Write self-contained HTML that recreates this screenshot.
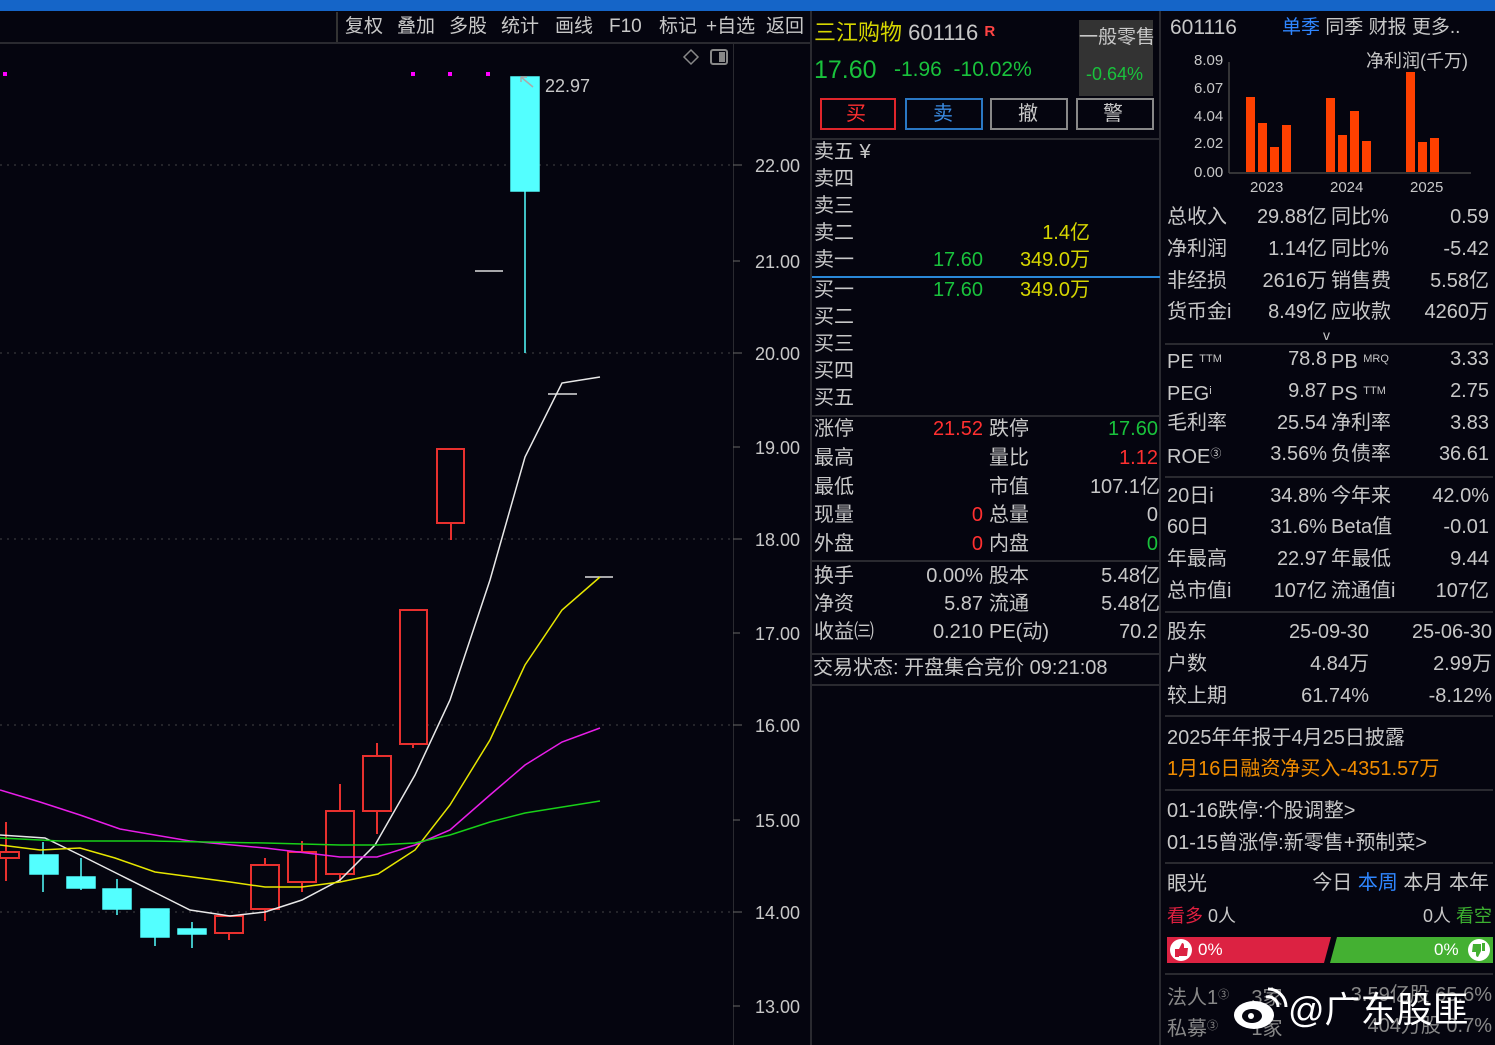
<!DOCTYPE html>
<html><head><meta charset="utf-8"><style>
*{margin:0;padding:0;box-sizing:border-box}
body{width:1495px;height:1045px;background:#05050f;overflow:hidden;position:relative;font-family:"Liberation Sans","Noto Sans CJK SC",sans-serif;color:#c8c8c8;font-size:20px}
.t{position:absolute;line-height:24px;white-space:nowrap}
.r{text-align:right}
.hl{position:absolute;height:2px;background:#2a2a30}
.g{color:#19c23c}.rd{color:#ff3030}.y{color:#d6d600}.b{color:#2f86ff}
sup{font-size:11px;vertical-align:6px}
</style></head><body>
<div style="position:absolute;left:0;top:0;width:1495px;height:11px;background:#1565c8"></div>
<!-- toolbar -->
<div style="position:absolute;left:0;top:42px;width:810px;height:2px;background:#2a2a30"></div>
<div style="position:absolute;left:336px;top:12px;width:2px;height:30px;background:#333"></div>
<div class="t" style="top:15px;left:345px;font-size:19px;word-spacing:0">复权</div>
<div class="t" style="top:15px;left:397px;font-size:19px">叠加</div>
<div class="t" style="top:15px;left:449px;font-size:19px">多股</div>
<div class="t" style="top:15px;left:501px;font-size:19px">统计</div>
<div class="t" style="top:15px;left:555px;font-size:19px">画线</div>
<div class="t" style="top:15px;left:609px;font-size:19px">F10</div>
<div class="t" style="top:15px;left:659px;font-size:19px">标记</div>
<div class="t" style="top:15px;left:706px;font-size:19px">+自选</div>
<div class="t" style="top:15px;left:766px;font-size:19px">返回</div>
<div style="position:absolute;left:733px;top:44px;width:1px;height:1001px;background:#2a2a30"></div>
<div style="position:absolute;left:810px;top:11px;width:2px;height:1034px;background:#2a2a30"></div>
<div style="position:absolute;left:1159px;top:11px;width:2px;height:1034px;background:#2a2a30"></div>
<svg style="position:absolute;left:0;top:0" width="810" height="1045">
<g stroke="#444" stroke-dasharray="2,5" stroke-width="1">
<line x1="0" y1="165" x2="733" y2="165"/><line x1="0" y1="353" x2="733" y2="353"/><line x1="0" y1="539" x2="733" y2="539"/><line x1="0" y1="725" x2="733" y2="725"/><line x1="0" y1="912" x2="733" y2="912"/>
</g>
<g stroke="#666" stroke-width="1"><line x1="733" y1="165" x2="742" y2="165"/><line x1="733" y1="261" x2="740" y2="261"/><line x1="733" y1="353" x2="742" y2="353"/><line x1="733" y1="447" x2="740" y2="447"/><line x1="733" y1="539" x2="742" y2="539"/><line x1="733" y1="633" x2="740" y2="633"/><line x1="733" y1="725" x2="742" y2="725"/><line x1="733" y1="820" x2="740" y2="820"/><line x1="733" y1="912" x2="742" y2="912"/><line x1="733" y1="1006" x2="740" y2="1006"/></g>
<path d="M691 50 L698 57 L691 64 L684 57Z" fill="none" stroke="#888" stroke-width="1.5"/>
<rect x="711" y="50" width="16" height="14" rx="2" fill="none" stroke="#888" stroke-width="2"/><rect x="719" y="52" width="6" height="10" fill="#888"/>
<g fill="#f0f"><rect x="3" y="72" width="4" height="4"/><rect x="411" y="72" width="4" height="4"/><rect x="448" y="72" width="4" height="4"/><rect x="486" y="72" width="4" height="4"/></g>
<!-- cyan candles -->
<g stroke="#53ffff" fill="#53ffff" stroke-width="1.5">
<line x1="43" y1="842" x2="43" y2="892"/><rect x="30" y="855" width="28" height="19"/>
<line x1="81" y1="858" x2="81" y2="890"/><rect x="67" y="877" width="28" height="11"/>
<line x1="117" y1="879" x2="117" y2="915"/><rect x="103" y="889" width="28" height="20"/>
<line x1="155" y1="909" x2="155" y2="946"/><rect x="141" y="909" width="28" height="28"/>
<line x1="192" y1="922" x2="192" y2="948"/><rect x="178" y="929" width="28" height="5"/>
<line x1="525" y1="77" x2="525" y2="353"/><rect x="511" y="77" width="28" height="114"/>
</g>
<!-- red candles -->
<g stroke="#e8302e" fill="#05050f" stroke-width="2">
<line x1="6" y1="822" x2="6" y2="881"/><rect x="0" y="852" width="19" height="6"/>
<line x1="229" y1="933" x2="229" y2="940"/><rect x="215" y="916" width="28" height="17"/>
<line x1="265" y1="858" x2="265" y2="921"/><rect x="251" y="865" width="28" height="44"/>
<line x1="302" y1="841" x2="302" y2="892"/><rect x="288" y="852" width="28" height="30"/>
<line x1="340" y1="784" x2="340" y2="881"/><rect x="326" y="811" width="28" height="63"/>
<line x1="377" y1="743" x2="377" y2="834"/><rect x="363" y="756" width="28" height="55"/>
<line x1="413" y1="744" x2="413" y2="748"/><rect x="400" y="610" width="27" height="134"/>
<line x1="451" y1="523" x2="451" y2="540"/><rect x="437" y="449" width="27" height="74"/>
</g>
<g stroke="#ddd" stroke-width="1.5"><line x1="475" y1="271" x2="503" y2="271"/><line x1="548" y1="394" x2="577" y2="394"/></g>
<line x1="585" y1="577" x2="613" y2="577" stroke="#ddd" stroke-width="1.5"/>
<g fill="none" stroke-width="1.5">
<polyline stroke="#e8e8e8" points="0,835 45,838 80,855 120,875 160,895 190,910 230,916 265,912 302,900 340,880 375,845 415,775 450,700 490,580 525,457 562,383 600,377"/>
<polyline stroke="#e6e600" points="0,845 40,850 80,848 115,858 155,872 230,882 265,887 302,887 340,882 378,874 415,850 450,805 490,740 525,665 562,610 600,577"/>
<polyline stroke="#e81ee8" points="0,790 40,802 80,815 120,829 190,841 265,848 340,857 377,857 415,845 450,830 490,795 525,765 562,742 600,728"/>
<polyline stroke="#18d018" points="0,838 60,841 150,841 265,843 340,845 377,845 415,843 450,835 490,822 525,813 600,801"/>
</g>
<path d="M521 77 L533 87 M521 77 L527 77 M521 77 L521 82" stroke="#aaa" stroke-width="1.5" fill="none"/>
</svg>
<div class="t" style="top:74px;left:545px;font-size:18px">22.97</div>
<div class="t" style="top:154px;left:755px;font-size:18px">22.00</div>
<div class="t" style="top:250px;left:755px;font-size:18px">21.00</div>
<div class="t" style="top:342px;left:755px;font-size:18px">20.00</div>
<div class="t" style="top:436px;left:755px;font-size:18px">19.00</div>
<div class="t" style="top:528px;left:755px;font-size:18px">18.00</div>
<div class="t" style="top:622px;left:755px;font-size:18px">17.00</div>
<div class="t" style="top:714px;left:755px;font-size:18px">16.00</div>
<div class="t" style="top:809px;left:755px;font-size:18px">15.00</div>
<div class="t" style="top:901px;left:755px;font-size:18px">14.00</div>
<div class="t" style="top:995px;left:755px;font-size:18px">13.00</div>

<!-- quote column -->
<div class="t" style="top:20px;left:814px;font-size:22px"><span class="y">三江购物</span> 601116 <span style="color:#ff4444;font-size:15px;font-weight:bold;vertical-align:4px">R</span></div>
<div style="position:absolute;left:1079px;top:20px;width:74px;height:76px;background:#333"></div>
<div class="t" style="top:26px;left:1079px;font-size:19px">一般零售</div>
<div class="t g" style="top:62px;left:1086px;font-size:18px">-0.64%</div>
<div class="t g" style="top:57px;left:814px;font-size:25px;line-height:26px">17.60</div>
<div class="t g" style="top:58px;left:894px;font-size:21px">-1.96&nbsp;&nbsp;-10.02%</div>
<div style="position:absolute;left:820px;top:98px;width:76px;height:32px;border:2px solid #e0252b"></div>
<div class="t rd" style="top:102px;left:846px">买</div>
<div style="position:absolute;left:905px;top:98px;width:78px;height:32px;border:2px solid #2a78c4"></div>
<div class="t b" style="top:102px;left:933px;color:#3a8ae0">卖</div>
<div style="position:absolute;left:990px;top:98px;width:78px;height:32px;border:2px solid #888"></div>
<div class="t" style="top:102px;left:1018px">撤</div>
<div style="position:absolute;left:1076px;top:98px;width:78px;height:32px;border:2px solid #888"></div>
<div class="t" style="top:102px;left:1103px">警</div>
<div class="hl" style="left:812px;top:138px;width:347px"></div>
<div class="t" style="top:140px;left:814px">卖五 ¥</div>
<div class="t" style="top:167px;left:814px">卖四</div>
<div class="t" style="top:194px;left:814px">卖三</div>
<div class="t" style="top:221px;left:814px">卖二</div>
<div class="t" style="top:248px;left:814px">卖一</div>
<div class="t y" style="top:221px;right:405px">1.4亿</div>
<div class="t g" style="top:248px;right:512px">17.60</div>
<div class="t y" style="top:248px;right:405px">349.0万</div>
<div style="position:absolute;left:812px;top:276px;width:348px;height:1.5px;background:#2a88d8"></div>
<div class="t" style="top:278px;left:814px">买一</div>
<div class="t g" style="top:278px;right:512px">17.60</div>
<div class="t y" style="top:278px;right:405px">349.0万</div>
<div class="t" style="top:305px;left:814px">买二</div>
<div class="t" style="top:332px;left:814px">买三</div>
<div class="t" style="top:359px;left:814px">买四</div>
<div class="t" style="top:386px;left:814px">买五</div>
<div class="hl" style="left:812px;top:415px;width:347px"></div>
<div class="t" style="top:417px;left:814px">涨停</div><div class="t rd" style="top:417px;right:512px">21.52</div><div class="t" style="top:417px;left:989px">跌停</div><div class="t g" style="top:417px;right:337px">17.60</div>
<div class="t" style="top:446px;left:814px">最高</div><div class="t" style="top:446px;left:989px">量比</div><div class="t rd" style="top:446px;right:337px">1.12</div>
<div class="t" style="top:475px;left:814px">最低</div><div class="t" style="top:475px;left:989px">市值</div><div class="t" style="top:475px;right:335px">107.1亿</div>
<div class="t" style="top:503px;left:814px">现量</div><div class="t rd" style="top:503px;right:512px">0</div><div class="t" style="top:503px;left:989px">总量</div><div class="t" style="top:503px;right:337px">0</div>
<div class="t" style="top:532px;left:814px">外盘</div><div class="t rd" style="top:532px;right:512px">0</div><div class="t" style="top:532px;left:989px">内盘</div><div class="t g" style="top:532px;right:337px">0</div>
<div class="hl" style="left:812px;top:560px;width:347px"></div>
<div class="t" style="top:564px;left:814px">换手</div><div class="t" style="top:564px;right:512px">0.00%</div><div class="t" style="top:564px;left:989px">股本</div><div class="t" style="top:564px;right:335px">5.48亿</div>
<div class="t" style="top:592px;left:814px">净资</div><div class="t" style="top:592px;right:512px">5.87</div><div class="t" style="top:592px;left:989px">流通</div><div class="t" style="top:592px;right:335px">5.48亿</div>
<div class="t" style="top:620px;left:814px">收益㈢</div><div class="t" style="top:620px;right:512px">0.210</div><div class="t" style="top:620px;left:989px">PE(动)</div><div class="t" style="top:620px;right:337px">70.2</div>
<div class="hl" style="left:812px;top:653px;width:347px"></div>
<div class="t" style="top:656px;left:813px">交易状态: 开盘集合竞价 09:21:08</div>
<div class="hl" style="left:812px;top:684px;width:347px"></div>

<!-- F10 column -->
<div class="t" style="top:16px;left:1170px;font-size:21px">601116</div>
<div class="t" style="top:16px;left:1282px;font-size:19px"><span class="b">单季</span> 同季 财报 更多..</div>
<svg style="position:absolute;left:1161px;top:44px" width="334" height="160">
<line x1="68" y1="18" x2="68" y2="129" stroke="#444" stroke-width="1.5"/>
<line x1="68" y1="129" x2="310" y2="129" stroke="#444" stroke-width="1.5"/>
<g fill="#ff4000">
<rect x="85" y="53" width="9" height="75"/><rect x="97" y="79" width="9" height="49"/><rect x="109" y="103" width="9" height="25"/><rect x="121" y="81" width="9" height="47"/>
<rect x="165" y="54" width="9" height="74"/><rect x="177" y="91" width="9" height="37"/><rect x="189" y="67" width="9" height="61"/><rect x="201" y="97" width="9" height="31"/>
<rect x="245" y="28" width="9" height="100"/><rect x="257" y="98" width="9" height="30"/><rect x="269" y="94" width="9" height="34"/>
</g></svg>
<div class="t" style="top:49px;left:1194px;font-size:15px">8.09</div>
<div class="t" style="top:77px;left:1194px;font-size:15px">6.07</div>
<div class="t" style="top:105px;left:1194px;font-size:15px">4.04</div>
<div class="t" style="top:132px;left:1194px;font-size:15px">2.02</div>
<div class="t" style="top:161px;left:1194px;font-size:15px">0.00</div>
<div class="t" style="top:49px;left:1366px;font-size:18px">净利润(千万)</div>
<div class="t" style="top:176px;left:1250px;font-size:15px">2023</div>
<div class="t" style="top:176px;left:1330px;font-size:15px">2024</div>
<div class="t" style="top:176px;left:1410px;font-size:15px">2025</div>
<div class="t" style="top:205px;left:1167px">总收入</div><div class="t" style="top:205px;right:168px">29.88亿</div><div class="t" style="top:205px;left:1331px">同比%</div><div class="t" style="top:205px;right:6px">0.59</div>
<div class="t" style="top:237px;left:1167px">净利润</div><div class="t" style="top:237px;right:168px">1.14亿</div><div class="t" style="top:237px;left:1331px">同比%</div><div class="t" style="top:237px;right:6px">-5.42</div>
<div class="t" style="top:269px;left:1167px">非经损</div><div class="t" style="top:269px;right:168px">2616万</div><div class="t" style="top:269px;left:1331px">销售费</div><div class="t" style="top:269px;right:6px">5.58亿</div>
<div class="t" style="top:300px;left:1167px">货币金i</div><div class="t" style="top:300px;right:168px">8.49亿</div><div class="t" style="top:300px;left:1331px">应收款</div><div class="t" style="top:300px;right:6px">4260万</div>
<div class="t" style="top:323px;left:1323px;font-size:14px">v</div>
<div class="hl" style="left:1165px;top:343px;width:328px"></div>
<div class="t" style="top:347px;left:1167px">PE <sup>TTM</sup></div><div class="t" style="top:347px;right:168px">78.8</div><div class="t" style="top:347px;left:1331px">PB <sup>MRQ</sup></div><div class="t" style="top:347px;right:6px">3.33</div>
<div class="t" style="top:379px;left:1167px">PEG<sup>i</sup></div><div class="t" style="top:379px;right:168px">9.87</div><div class="t" style="top:379px;left:1331px">PS <sup>TTM</sup></div><div class="t" style="top:379px;right:6px">2.75</div>
<div class="t" style="top:411px;left:1167px">毛利率</div><div class="t" style="top:411px;right:168px">25.54</div><div class="t" style="top:411px;left:1331px">净利率</div><div class="t" style="top:411px;right:6px">3.83</div>
<div class="t" style="top:442px;left:1167px">ROE<sup>③</sup></div><div class="t" style="top:442px;right:168px">3.56%</div><div class="t" style="top:442px;left:1331px">负债率</div><div class="t" style="top:442px;right:6px">36.61</div>
<div class="hl" style="left:1165px;top:476px;width:328px"></div>
<div class="t" style="top:484px;left:1167px">20日i</div><div class="t" style="top:484px;right:168px">34.8%</div><div class="t" style="top:484px;left:1331px">今年来</div><div class="t" style="top:484px;right:6px">42.0%</div>
<div class="t" style="top:515px;left:1167px">60日</div><div class="t" style="top:515px;right:168px">31.6%</div><div class="t" style="top:515px;left:1331px">Beta值</div><div class="t" style="top:515px;right:6px">-0.01</div>
<div class="t" style="top:547px;left:1167px">年最高</div><div class="t" style="top:547px;right:168px">22.97</div><div class="t" style="top:547px;left:1331px">年最低</div><div class="t" style="top:547px;right:6px">9.44</div>
<div class="t" style="top:579px;left:1167px">总市值i</div><div class="t" style="top:579px;right:168px">107亿</div><div class="t" style="top:579px;left:1331px">流通值i</div><div class="t" style="top:579px;right:6px">107亿</div>
<div class="hl" style="left:1165px;top:611px;width:328px"></div>
<div class="t" style="top:620px;left:1167px">股东</div><div class="t" style="top:620px;right:126px">25-09-30</div><div class="t" style="top:620px;right:3px">25-06-30</div>
<div class="t" style="top:652px;left:1167px">户数</div><div class="t" style="top:652px;right:126px">4.84万</div><div class="t" style="top:652px;right:3px">2.99万</div>
<div class="t" style="top:684px;left:1167px">较上期</div><div class="t" style="top:684px;right:126px">61.74%</div><div class="t" style="top:684px;right:3px">-8.12%</div>
<div class="hl" style="left:1165px;top:715px;width:328px"></div>
<div class="t" style="top:726px;left:1167px">2025年年报于4月25日披露</div>
<div class="t" style="top:757px;left:1167px;color:#f08c00">1月16日融资净买入-4351.57万</div>
<div class="hl" style="left:1165px;top:789px;width:328px"></div>
<div class="t" style="top:799px;left:1167px">01-16跌停:个股调整&gt;</div>
<div class="t" style="top:831px;left:1167px">01-15曾涨停:新零售+预制菜&gt;</div>
<div class="hl" style="left:1165px;top:862px;width:328px"></div>
<div class="t" style="top:872px;left:1167px">眼光</div>
<div class="t" style="top:871px;right:6px">今日 <span class="b">本周</span> 本月 本年</div>
<div class="t" style="top:904px;left:1167px;font-size:18px"><span style="color:#e02040">看多</span> 0人</div>
<div class="t" style="top:904px;right:3px;font-size:18px">0人 <span class="g" style="color:#3cb030">看空</span></div>
<svg style="position:absolute;left:1165px;top:935px" width="330" height="30">
<polygon points="2,2 166,2 159,28 2,28" fill="#dc2242"/>
<polygon points="172,2 328,2 328,28 165,28" fill="#44b032"/>
<circle cx="16" cy="15" r="11" fill="#fff"/><circle cx="314" cy="15" r="11" fill="#fff"/>
<path d="M10 14h4v8h-4zM14 14l3-6c2 0 2 2 2 3v2h4l-1 8h-8z" fill="#dc2242"/>
<path d="M308 9h8v7l-3 6c-2 0-2-2-2-3v-2h-4zM317 8h3v8h-3z" fill="#44b032"/>
</svg>
<div class="t" style="top:938px;left:1198px;font-size:17px;color:#fff">0%</div>
<div class="t" style="top:938px;left:1434px;font-size:17px;color:#fff">0%</div>
<div class="hl" style="left:1165px;top:973px;width:328px"></div>
<div class="t" style="top:983px;left:1167px;color:#888">法人1<sup>③</sup>&nbsp;&nbsp;&nbsp;&nbsp;3家</div>
<div class="t" style="top:983px;right:3px;color:#888">3.59亿股 65.6%</div>
<div class="t" style="top:1014px;left:1167px;color:#888">私募<sup>③</sup>&nbsp;&nbsp;&nbsp;&nbsp;&nbsp;&nbsp;1家</div>
<div class="t" style="top:1014px;right:3px;color:#888">404万股 0.7%</div>
<svg style="position:absolute;left:1230px;top:985px" width="60" height="48">
<ellipse cx="24" cy="30" rx="20" ry="14" fill="#fff"/><ellipse cx="22" cy="31" rx="10" ry="7" fill="#05050f"/><circle cx="21" cy="31" r="3" fill="#fff"/>
<path d="M36 12a10 10 0 0 1 12 10M38 4a18 18 0 0 1 18 18" stroke="#fff" stroke-width="3" fill="none"/>
</svg>
<div class="t" style="top:990px;left:1288px;font-size:36px;line-height:40px;color:#fff">@广东股匪</div>
</body></html>
